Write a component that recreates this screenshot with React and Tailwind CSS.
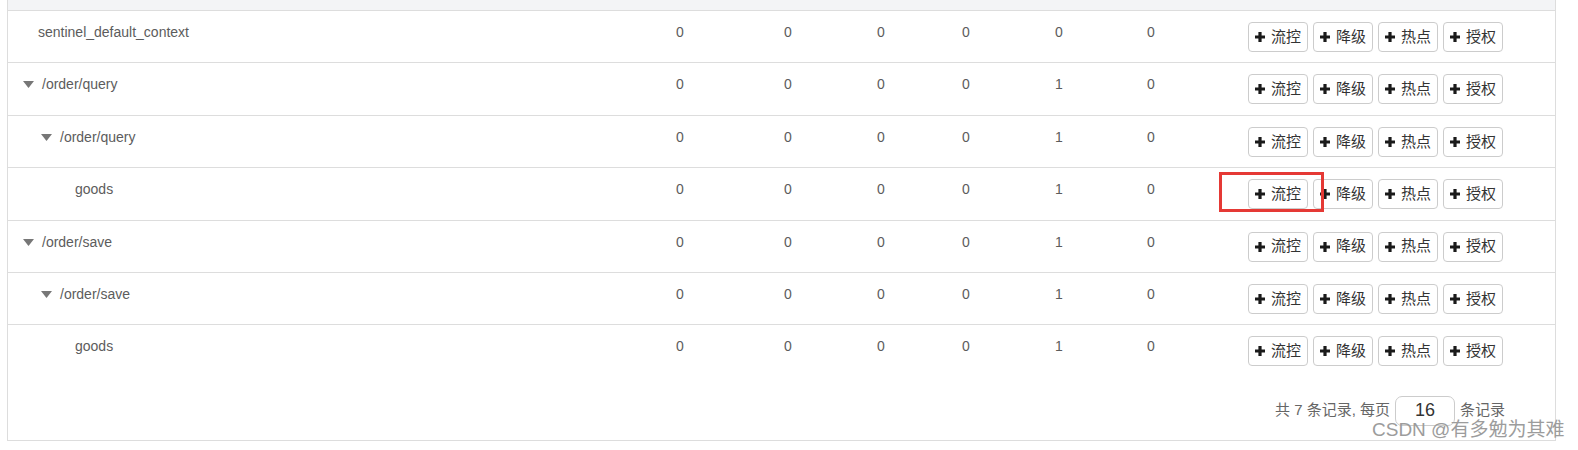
import React from "react";

const rows = [
  { name: "sentinel_default_context", level: 0, arrow: false, nums: [0, 0, 0, 0, 0, 0] },
  { name: "/order/query", level: 0, arrow: true, nums: [0, 0, 0, 0, 1, 0] },
  { name: "/order/query", level: 1, arrow: true, nums: [0, 0, 0, 0, 1, 0] },
  { name: "goods", level: 2, arrow: false, nums: [0, 0, 0, 0, 1, 0] },
  { name: "/order/save", level: 0, arrow: true, nums: [0, 0, 0, 0, 1, 0] },
  { name: "/order/save", level: 1, arrow: true, nums: [0, 0, 0, 0, 1, 0] },
  { name: "goods", level: 2, arrow: false, nums: [0, 0, 0, 0, 1, 0] },
];

const numWidths = ["w-[108px]", "w-[93px]", "w-[85px]", "w-[93px]", "w-[92px]", "w-[101px]"];
const ops = ["流控", "降级", "热点", "授权"];

const Plus = () => (
  <svg width="10" height="10" viewBox="0 0 10 10">
    <path d="M5 0 V10 M0 5 H10" stroke="#1a1a1a" strokeWidth="3.2" />
  </svg>
);

const Caret = () => (
  <svg width="11" height="7" viewBox="0 0 11 7" className="mt-[7px]">
    <path d="M0 0 H11 L5.5 7 Z" fill="#777" />
  </svg>
);

const NameCell = ({ row }) => {
  // 每层缩进不同
  let pl = "pl-[30px]";
  if (row.arrow && row.level === 0) pl = "pl-[15px]";
  if (row.arrow && row.level === 1) pl = "pl-[33px]";
  if (row.level === 2) pl = "pl-[67px]";
  return (
    <div className={`w-[658px] flex gap-[8px] pt-[11px] ${pl}`}>
      {row.arrow && <Caret />}
      <span className="leading-[20px]">{row.name}</span>
    </div>
  );
};

const App = () => {
  return (
    <div className="relative w-[1578px] h-[450px] bg-white text-[14px] text-[#5c5c5c] font-['Liberation_Sans','Noto_Sans_CJK_SC',sans-serif]">
      <div className="ml-[7px] w-[1549px] border-x border-b border-[#dddddd]">
        <div className="h-[10px] bg-[#f3f4f6]" />
        {rows.map((row, index) => {
          return (
            <div key={index} className="flex h-[52.4px] border-t border-[#dddddd]">
              <NameCell row={row} />
              {row.nums.map((n, i) => (
                <div key={i} className={`${numWidths[i]} pl-[10px] pt-[11px] leading-[20px]`}>
                  {n}
                </div>
              ))}
              <div className="flex gap-[5px] pl-[10px] pt-[11px]">
                {ops.map((op) => (
                  <button
                    key={op}
                    className="w-[60px] h-[30px] flex items-center justify-center gap-[6px] border border-[#cccccc] rounded-[4px] bg-white text-[15px] text-[#333]"
                  >
                    <Plus />
                    <span>{op}</span>
                  </button>
                ))}
              </div>
            </div>
          );
        })}
        <div className="flex justify-end items-center pr-[50px] pt-[19px] pb-[14px] text-[15px] text-[#666]">
          <span>共 7 条记录, 每页</span>
          <div className="mx-[5px] w-[60px] h-[30px] border border-[#cccccc] rounded-[7px] flex items-center justify-center text-[18px] text-[#333]">
            16
          </div>
          <span>条记录</span>
        </div>
      </div>
      {/* 红框标注 */}
      <div className="absolute left-[1219px] top-[172px] w-[105px] h-[40px] border-[3px] border-[#e53935]" />
      <div className="absolute left-[1372px] top-[419px] text-[19px] leading-[21px] text-[#9c9c9c] whitespace-nowrap">
        CSDN @有多勉为其难
      </div>
    </div>
  );
};

export default App;
